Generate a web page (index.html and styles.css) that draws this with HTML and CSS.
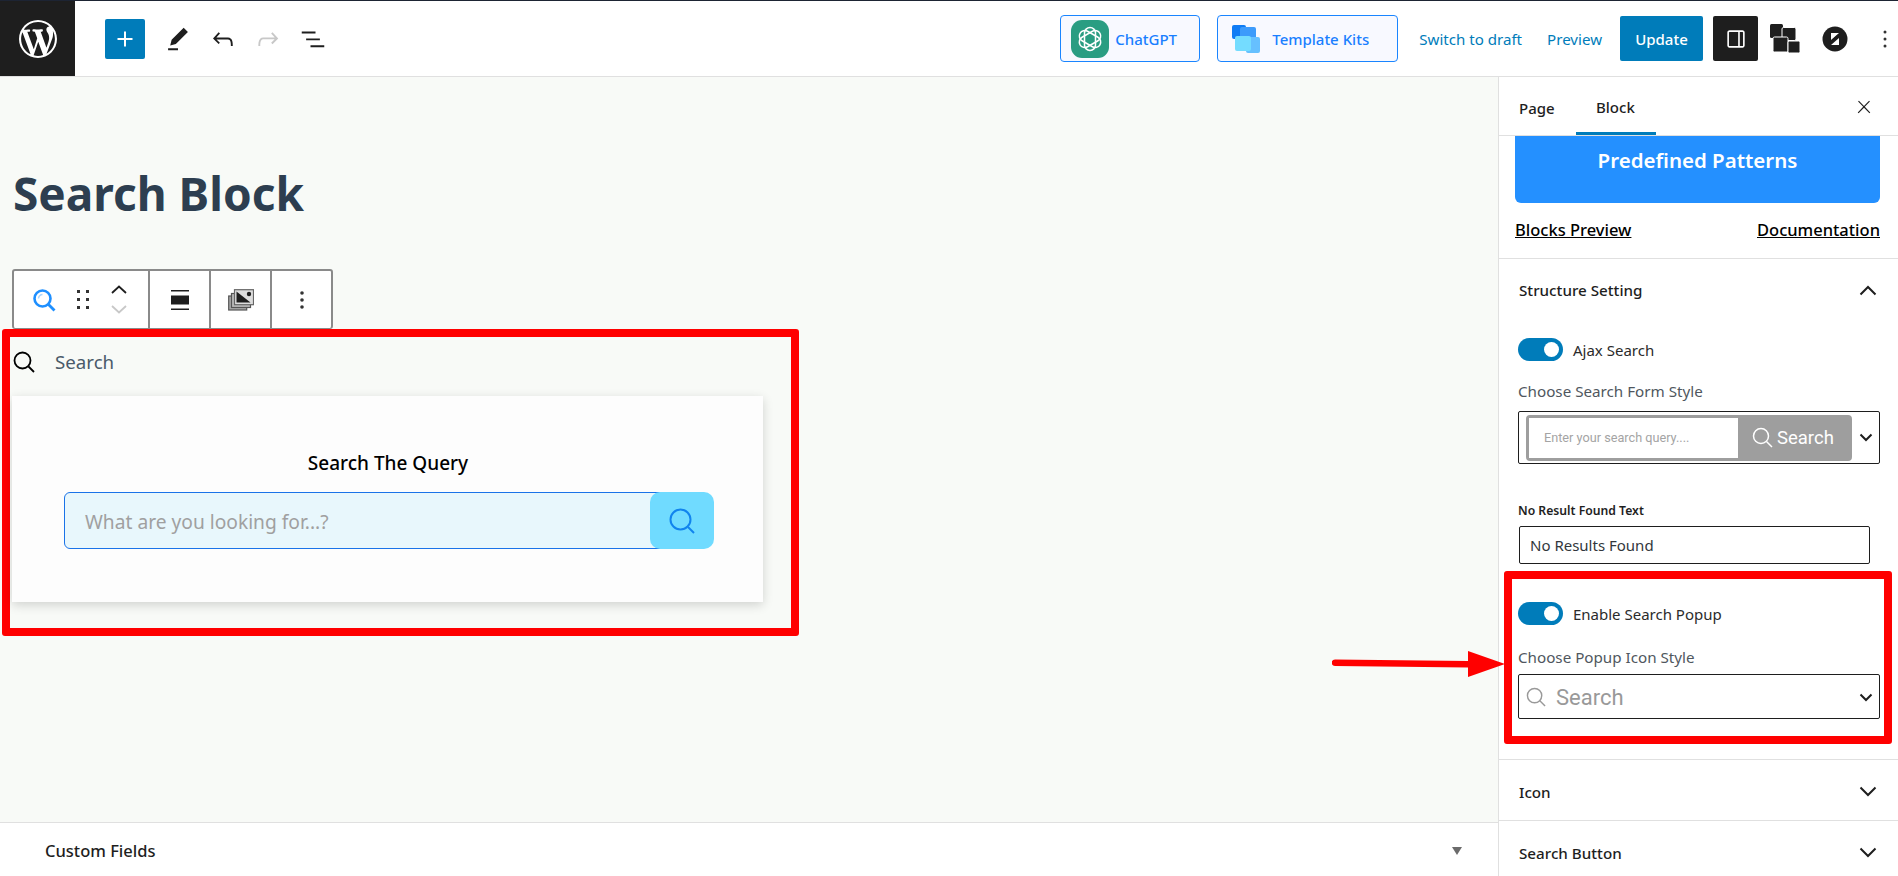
FILE: index.html
```html
<!DOCTYPE html>
<html lang="en">
<head>
<meta charset="utf-8">
<title>Search Block</title>
<link rel="stylesheet" href="styles.css">
</head>
<body>
<div class="app">
  <header class="topbar">
    <div class="wp-logo"><svg viewBox="0 0 20 20" width="38" height="38"><path fill="#fff" d="M20 10c0-5.51-4.49-10-10-10C4.48 0 0 4.49 0 10c0 5.52 4.48 10 10 10 5.51 0 10-4.48 10-10zM7.78 15.37L4.37 6.22c.55-.02 1.17-.08 1.17-.08.5-.06.44-1.13-.06-1.11 0 0-1.45.11-2.37.11-.18 0-.37 0-.58-.01C4.12 2.69 6.87 1.11 10 1.11c2.33 0 4.45.87 6.05 2.34-.68-.11-1.65.39-1.65 1.58 0 .74.45 1.36.9 2.1.35.61.55 1.36.55 2.46 0 1.49-1.4 5-1.4 5l-3.03-8.37c.54-.02.82-.17.82-.17.5-.05.44-1.25-.06-1.22 0 0-1.44.12-2.38.12-.87 0-2.33-.12-2.33-.12-.5-.03-.56 1.2-.06 1.22l.92.08 1.26 3.41zM17.41 10c.24-.64.74-1.87.43-4.25.7 1.29 1.05 2.71 1.05 4.25 0 3.29-1.73 6.24-4.4 7.78.97-2.59 1.94-5.2 2.92-7.78zM6.1 18.09C3.12 16.65 1.11 13.53 1.11 10c0-1.3.23-2.48.72-3.59C3.25 10.3 4.67 14.2 6.1 18.09zm4.03-6.63l2.58 6.98c-.86.29-1.76.45-2.71.45-.79 0-1.57-.11-2.29-.33.81-2.38 1.62-4.74 2.42-7.1z"/></svg></div>
    <div class="tools-left">
      <button class="add-btn"><svg viewBox="0 0 24 24" width="24" height="24"><path fill="#fff" d="M11 4.500h2V11h6.500v2H13v6.500h-2V13H4.500v-2H11z"/></svg></button>
      <svg class="tool-ic tool-pencil" viewBox="0 0 24 24" width="34" height="34"><path fill="#1e1e1e" d="m19 7-3-3-8.500 8.500-1 4 4-1L19 7Zm-7 11.500H5V20h7v-1.500Z"/></svg>
      <svg class="tool-ic" viewBox="0 0 24 24" width="30" height="30"><path fill="#1e1e1e" d="M18.300 11.700c-.6-.6-1.400-.9-2.300-.9H6.700l2.900-3.300-1.100-1-4.500 5L8.500 16l1-1-2.700-2.700H16c.5 0 .9.2 1.300.5 1 1 1 3.400 1 4.500v.3h1.500v-.2c0-1.500 0-4.300-1.500-5.700z"/></svg>
      <svg class="tool-ic" viewBox="0 0 24 24" width="30" height="30"><path fill="#c8c8c8" d="M15.600 6.500l-1.100 1 2.900 3.300H8c-.9 0-1.700.3-2.300.9-1.400 1.500-1.400 4.200-1.400 5.600v.2h1.500v-.3c0-1.100 0-3.500 1-4.500.3-.3.7-.5 1.300-.5h9.200L14.500 15l1.100 1.100 4.600-4.600-4.600-5z"/></svg>
      <svg class="tool-ic" viewBox="0 0 24 24" width="30" height="30"><path fill="#1e1e1e" d="M3 6h11v1.500H3V6zm3.500 5.500h11V13h-11v-1.500zM21 17H10v1.500h11V17z"/></svg>
    </div>
    <div class="tools-right">
      <button class="pill pill-gpt">
        <svg class="gpt-logo" viewBox="0 0 38 38" width="38" height="38">
          <rect width="38" height="38" rx="11" fill="#2a9d82"/>
          <g fill="none" stroke="#fff" stroke-width="1.500">
            <rect x="13.500" y="7.500" width="11" height="23" rx="5.500"/>
            <rect x="13.500" y="7.500" width="11" height="23" rx="5.500" transform="rotate(60 19 19)"/>
            <rect x="13.500" y="7.500" width="11" height="23" rx="5.500" transform="rotate(120 19 19)"/>
          </g>
        </svg>
        <span>ChatGPT</span>
      </button>
      <button class="pill pill-kits">
        <svg viewBox="0 0 28 28" width="28" height="28">
          <rect x="0" y="0" width="14" height="14" rx="2" fill="#0f7cf5"/>
          <rect x="8" y="2" width="16" height="15" rx="2" fill="#3d9bfb"/>
          <rect x="14" y="12" width="14" height="16" rx="2" fill="#66c0ff"/>
          <rect x="3" y="11" width="16" height="15" rx="2" fill="#74dcff"/>
        </svg>
        <span>Template Kits</span>
      </button>
      <a class="top-link link-draft">Switch to draft</a>
      <a class="top-link link-preview">Preview</a>
      <button class="update">Update</button>
      <button class="settings"><svg viewBox="0 0 24 24" width="26" height="26"><path fill="#fff" d="M18 4H6c-1.100 0-2 .9-2 2v12c0 1.100.9 2 2 2h12c1.100 0 2-.9 2-2V6c0-1.100-.9-2-2-2zM5.500 18V6c0-.3.2-.5.5-.5h8v13H6c-.3 0-.5-.2-.5-.5zm13 0c0 .3-.2.5-.5.5h-2.500v-13H18c.3 0 .5.2.5.5v12z"/></svg></button>
      <svg class="stack-ic" viewBox="0 0 30 30" width="30" height="30">
        <rect x="0" y="0" width="13" height="14" rx="1.500" fill="#1e1e1e"/>
        <rect x="12" y="3.500" width="14" height="13" rx="1.500" fill="#1e1e1e" stroke="#fff" stroke-width="1"/>
        <rect x="3" y="13" width="15" height="15" rx="1.500" fill="#1e1e1e" stroke="#fff" stroke-width="1"/>
        <rect x="18" y="17" width="12" height="12" rx="1.500" fill="#1e1e1e" stroke="#fff" stroke-width="1"/>
      </svg>
      <svg class="circle-ic" viewBox="0 0 26 26" width="26" height="26">
        <circle cx="13" cy="13" r="12.500" fill="#1e1e1e"/>
        <path d="M9 7h8l-8 7zM17 12v7H9z" fill="#fff"/>
        <path d="M7 17 19 7" stroke="#1e1e1e" stroke-width="1.500"/>
      </svg>
      <svg class="more-ic" viewBox="0 0 4 18" width="4" height="18"><circle cx="2" cy="2" r="1.500" fill="#333"/><circle cx="2" cy="9" r="1.500" fill="#333"/><circle cx="2" cy="16" r="1.500" fill="#333"/></svg>
    </div>
  </header>

  <div class="workspace">
    <main class="editor">
      <div class="canvas">
        <h1 class="page-title">Search Block</h1>
        <div class="block-toolbar">
          <div class="tb-group tb-first">
            <svg viewBox="0 0 24 24" width="24" height="24" class="tb-search"><circle cx="10.500" cy="10.500" r="8" fill="none" stroke="#1e8fff" stroke-width="2.600"/><path d="M16.500 16.500 22.500 22.500" stroke="#1e8fff" stroke-width="2.800"/><path d="M6.500 10.500a4 4 0 0 1 4-4" fill="none" stroke="#a9d5ff" stroke-width="1.500"/></svg>
            <svg viewBox="0 0 12 20" width="12" height="20" class="tb-drag"><g fill="#333"><rect x="0" y="0" width="3" height="3"/><rect x="9" y="0" width="3" height="3"/><rect x="0" y="8" width="3" height="3"/><rect x="9" y="8" width="3" height="3"/><rect x="0" y="16" width="3" height="3"/><rect x="9" y="16" width="3" height="3"/></g></svg>
            <div class="tb-move">
              <svg viewBox="0 0 16 9" width="16" height="9"><path d="M1 8 8 1.500 15 8" fill="none" stroke="#1e1e1e" stroke-width="1.800"/></svg>
              <svg viewBox="0 0 16 9" width="16" height="9"><path d="M1 1 8 7.500 15 1" fill="none" stroke="#c8c8c8" stroke-width="1.800"/></svg>
            </div>
          </div>
          <div class="tb-group tb-cell">
            <svg viewBox="0 0 18 20" width="18" height="20"><path fill="#1e1e1e" d="M0 0h18v1.500H0zM0 5.500h18v9H0zM0 18.500h18V20H0z"/></svg>
          </div>
          <div class="tb-group tb-cell">
            <svg viewBox="0 0 26 22" width="26" height="22"><rect x=".7" y="7" width="18" height="14" fill="#aaa" stroke="#555" stroke-width="1.200"/><rect x="3.500" y="4.500" width="19" height="14" fill="#bbb" stroke="#555" stroke-width="1.200"/><rect x="6.500" y=".7" width="19" height="15" fill="#ddd" stroke="#666" stroke-width="1.200"/><path d="M8.500 2.500v11h14z" fill="#1e1e1e"/><circle cx="21" cy="5" r="2.200" fill="#1e1e1e"/></svg>
          </div>
          <div class="tb-group tb-cell tb-last">
            <svg viewBox="0 0 4 18" width="4" height="18"><circle cx="2" cy="2" r="1.800" fill="#333"/><circle cx="2" cy="9" r="1.800" fill="#333"/><circle cx="2" cy="16" r="1.800" fill="#333"/></svg>
          </div>
        </div>
        <section class="red-frame block-frame">
          <div class="popup-trigger">
            <svg viewBox="0 0 22 22" width="22" height="22"><circle cx="9.500" cy="9.500" r="8" fill="none" stroke="#000" stroke-width="1.800"/><path d="M15.500 15.500 21 21" stroke="#000" stroke-width="1.800"/></svg>
            <span>Search</span>
          </div>
          <div class="popup-card">
            <div class="popup-title">Search The Query</div>
            <div class="popup-form">
              <div class="popup-input">What are you looking for...?</div>
              <div class="popup-btn"><svg viewBox="0 0 26 26" width="26" height="26"><circle cx="11.500" cy="11.500" r="10" fill="none" stroke="#1184ee" stroke-width="2"/><path d="M19 19 25 25" stroke="#1184ee" stroke-width="2"/></svg></div>
            </div>
          </div>
        </section>
      </div>
      <div class="meta-bar">
        <span>Custom Fields</span>
        <i class="meta-caret"></i>
      </div>
    </main>

    <aside class="sidebar">
      <div class="side-tabs">
        <div class="tab">Page</div>
        <div class="tab tab-active">Block</div>
        <svg class="close" viewBox="0 0 24 24" width="20" height="20"><path fill="#1e1e1e" d="M13 11.800l6.100-6.300-1-1-6.100 6.200-6.100-6.200-1 1 6.100 6.300-6.500 6.700 1 1 6.500-6.600 6.500 6.600 1-1z"/></svg>
      </div>
      <div class="patterns">
        <div class="patterns-btn">Predefined Patterns</div>
        <div class="patterns-links"><a>Blocks Preview</a><a>Documentation</a></div>
      </div>
      <section class="panel panel-open">
        <div class="panel-head panel-head-open">
          <span>Structure Setting</span>
          <svg viewBox="0 0 18 11" width="18" height="11"><path d="M1.500 9.500 9 2l7.500 7.500" fill="none" stroke="#1e1e1e" stroke-width="2"/></svg>
        </div>
        <div class="toggle-row"><span class="toggle"></span><span>Ajax Search</span></div>
        <div class="field-label">Choose Search Form Style</div>
        <div class="select select-form">
          <div class="form-preview">
            <div class="fp-input">Enter your search query....</div>
            <div class="fp-btn"><svg viewBox="0 0 22 22" width="22" height="22"><circle cx="9" cy="9" r="7.500" fill="none" stroke="#fff" stroke-width="1.500"/><path d="M14.500 14.500 20 20" stroke="#fff" stroke-width="1.500"/></svg><span>Search</span></div>
          </div>
          <svg class="sel-chev" viewBox="0 0 14 9" width="14" height="9"><path d="M1.500 1.500 7 7l5.500-5.500" fill="none" stroke="#1e1e1e" stroke-width="2"/></svg>
        </div>
        <div class="strong-label">No Result Found Text</div>
        <div class="text-input">No Results Found</div>
        <div class="red-frame side-frame">
          <div class="toggle-row toggle-row-framed"><span class="toggle"></span><span>Enable Search Popup</span></div>
          <div class="field-label field-label-framed">Choose Popup Icon Style</div>
          <div class="select select-icon">
            <svg viewBox="0 0 22 22" width="21" height="21"><circle cx="9" cy="9" r="7.500" fill="none" stroke="#999" stroke-width="1.500"/><path d="M14.500 14.500 20 20" stroke="#999" stroke-width="1.500"/></svg>
            <span>Search</span>
            <svg class="sel-chev" viewBox="0 0 14 9" width="14" height="9"><path d="M1.500 1.500 7 7l5.500-5.500" fill="none" stroke="#1e1e1e" stroke-width="2"/></svg>
          </div>
        </div>
      </section>
      <section class="panel panel-closed">
        <div class="panel-head"><span>Icon</span><svg viewBox="0 0 18 11" width="18" height="11"><path d="M1.500 1.500 9 9l7.500-7.500" fill="none" stroke="#1e1e1e" stroke-width="2"/></svg></div>
      </section>
      <section class="panel panel-closed">
        <div class="panel-head"><span>Search Button</span><svg viewBox="0 0 18 11" width="18" height="11"><path d="M1.500 1.500 9 9l7.500-7.500" fill="none" stroke="#1e1e1e" stroke-width="2"/></svg></div>
      </section>
    </aside>
  </div>

  <svg class="annot-arrow" viewBox="0 0 173 26" width="173" height="26"><path fill="#f00" d="M3 8.500 136 10V0l37 13-37 13V16.500L3 15a3 3 0 0 1 0-6.500z"/></svg>
</div>
</body>
</html>
```

FILE: styles.css
```css
* { box-sizing: border-box; }
html, body { margin: 0; height: 100%; }
body {
  font-family: "Noto Sans", "Open Sans", sans-serif;
  color: #1e1e1e;
  background: #fff;
  overflow: hidden;
}
button { font-family: inherit; border: 0; padding: 0; cursor: pointer; }
svg { display: block; flex: none; }

.app { position: relative; width: 1898px; height: 876px; display: flex; flex-direction: column; }

/* Top bar */
.topbar {
  height: 77px;
  flex: none;
  display: flex;
  align-items: center;
  border-top: 1px solid #1d2433;
  border-bottom: 1px solid #e0e0e0;
  background: #fff;
}
.wp-logo { width: 75px; height: 75px; background: #1e1e1e; display: flex; align-items: center; justify-content: center; }
.tools-left { display: flex; align-items: center; margin-left: 30px; }
.add-btn { width: 40px; height: 40px; background: #007cba; border-radius: 2px; display: flex; align-items: center; justify-content: center; margin-right: 18px; }
.tool-ic { margin-right: 15px; }
.tool-pencil { margin: 0 13px 0 -2px; }
.tools-right { margin-left: auto; display: flex; align-items: center; }
.pill {
  height: 47px;
  display: flex;
  align-items: center;
  border: 1px solid #1a85ff;
  border-radius: 4px;
  background: #f8f9ff;
  color: #1a7fff;
  font-size: 15px;
  font-weight: 500;
}
.pill-gpt { width: 140px; padding-left: 10px; margin-right: 17px; gap: 6px; }
.pill-kits { width: 181px; padding-left: 14px; margin-right: 21px; gap: 12px; }
.top-link { font-size: 15.100px; color: #007cba; }
.link-draft { margin-right: 25px; }
.link-preview { margin-right: 18px; }
.update { width: 83px; height: 45px; background: #007cba; color: #fff; font-size: 15px; font-weight: 500; border-radius: 2px; margin-right: 10px; }
.settings { width: 45px; height: 45px; background: #1e1e1e; border-radius: 2px; display: flex; align-items: center; justify-content: center; margin-right: 12px; }
.stack-ic { margin-right: 22px; }
.circle-ic { margin-right: 35px; }
.more-ic { margin-right: 11px; }

/* Workspace */
.workspace { flex: 1; min-height: 0; display: grid; grid-template-columns: 1fr 400px; }
.editor { display: flex; flex-direction: column; min-width: 0; }
.canvas { flex: 1; background: #f8faf7; overflow: hidden; }
.page-title {
  margin: 86px 0 46px 13px;
  font-size: 46px;
  line-height: 60px;
  font-weight: 700;
  color: #2d3e50;
}
.block-toolbar {
  margin-left: 12px;
  width: 321px;
  height: 60px;
  display: flex;
  background: #fff;
  border: 2px solid #8a8a8a;
  border-bottom-width: 1px;
  border-radius: 3px;
}
.tb-group { display: flex; align-items: center; height: 100%; border-right: 2px solid #8a8a8a; }
.tb-first { width: 136px; padding-left: 18px; }
.tb-search { margin-right: 21px; }
.tb-drag { margin-right: 22px; }
.tb-move { display: flex; flex-direction: column; gap: 11px; }
.tb-cell { width: 61px; justify-content: center; }
.tb-last { border-right: 0; flex: 1; }

.red-frame { border: 8px solid #f00; border-radius: 3px; }
.block-frame { margin-left: 2px; width: 797px; height: 307px; }
.popup-trigger { height: 59px; padding: 0 0 10px 3px; display: flex; align-items: center; gap: 20px; font-size: 18.700px; color: #4a5a6a; }
.popup-card {
  margin-left: 2px;
  width: 751px;
  height: 206px;
  padding: 51px 0 0 52px;
  background: #fdfdfd;
  box-shadow: 0 3px 10px rgba(0,0,0,.16);
}
.popup-title { width: 648px; text-align: center; font-size: 19px; line-height: 32px; font-weight: 500; color: #000; margin-bottom: 13px; }
.popup-form { position: relative; width: 650px; height: 57px; display: flex; }
.popup-input {
  flex: 1;
  margin-right: -12px;
  background: #e8f7fc;
  border: 1px solid #1a73e8;
  border-radius: 6px 0 0 6px;
  padding: 2px 0 0 20px;
  display: flex;
  align-items: center;
  font-size: 19.200px;
  color: #a0a0a0;
}
.popup-btn { position: relative; width: 64px; background: #70dbff; border-radius: 10px; display: flex; align-items: center; justify-content: center; }

.meta-bar {
  height: 54px;
  flex: none;
  border-top: 1px solid #e0e0e0;
  background: #fff;
  display: flex;
  align-items: center;
  justify-content: space-between;
  padding: 2px 36px 0 45px;
  font-size: 16.500px;
  font-weight: 500;
  color: #1e1e1e;
}
.meta-caret { width: 0; height: 0; border-left: 5px solid transparent; border-right: 5px solid transparent; border-top: 8px solid #6b6b6b; }

/* Sidebar */
.sidebar { border-left: 1px solid #e0e0e0; background: #fff; overflow: hidden; }
.side-tabs {
  height: 59px;
  display: flex;
  align-items: stretch;
  border-bottom: 1px solid #e0e0e0;
  position: relative;
}
.tab { width: 77px; padding: 4px 0 0 20px; display: flex; align-items: center; font-size: 15px; font-weight: 500; height: 58px; }
.tab-active { width: 80px; padding-left: 20px; border-bottom: 3px solid #007cba; }
.close { position: absolute; right: 24px; top: 20px; }
.patterns { height: 124px; border-bottom: 1px solid #e0e0e0; padding: 0 18px 0 16px; margin-top: -1px; }
.patterns-btn {
  height: 68px;
  background: #2490ff;
  border-radius: 0 0 6px 6px;
  color: #fff;
  text-align: center;
  font-size: 20.500px;
  font-weight: 600;
  line-height: 28px;
  padding-top: 11px;
}
.patterns-links { display: flex; justify-content: space-between; margin-top: 15px; font-size: 16.500px; line-height: 24px; font-weight: 500; color: #000; }
.patterns-links a { text-decoration: underline; }
.panel { border-bottom: 1px solid #e0e0e0; }
.panel-open { height: 501px; padding: 0 0 0 19px; }
.panel-head { display: flex; align-items: center; justify-content: space-between; font-size: 15.200px; font-weight: 500; padding-right: 21px; }
.panel-head-open { height: 62px; padding-left: 1px; }
.panel-closed .panel-head { height: 60px; padding: 3px 21px 0 20px; }
.panel-closed .panel-head svg { margin-top: -1px; }
.panel-closed { height: 61px; }
.toggle-row { display: flex; align-items: center; gap: 10px; font-size: 15px; color: #2b2b2b; height: 23px; margin-top: 17px; }
.toggle { width: 45px; height: 23px; background: #007cba; border-radius: 12px; position: relative; flex: none; }
.toggle::after { content: ""; position: absolute; right: 4px; top: 4px; width: 15px; height: 15px; background: #fff; border-radius: 50%; }
.field-label { margin: 20px 0 0 0; font-size: 15.200px; line-height: 20px; color: #50575e; }
.select { width: 362px; border: 1px solid #1e1e1e; border-radius: 2px; display: flex; align-items: center; background: #fff; }
.select-form { height: 53px; margin-top: 10px; padding-left: 7px; }
.form-preview { width: 326px; height: 46px; display: flex; border: 3px solid #9e9e9e; border-radius: 4px; }
.fp-input { width: 209px; background: #fff; font-size: 12.700px; color: #a4a4a4; display: flex; align-items: center; padding-left: 15px; font-family: Roboto, sans-serif; }
.fp-btn { flex: 1; background: #9e9e9e; display: flex; align-items: center; gap: 3px; padding-left: 14px; color: #fff; font-size: 18.500px; font-family: Roboto, sans-serif; }
.sel-chev { margin-left: auto; margin-right: 6px; }
.strong-label { margin-top: 38px; font-size: 12.200px; line-height: 18px; font-weight: 600; color: #1e1e1e; }
.text-input { width: 351px; height: 38px; margin: 6px 0 0 1px; border: 1px solid #1e1e1e; border-radius: 2px; padding-left: 10px; display: flex; align-items: center; font-size: 15px; color: #32373c; }
.side-frame { margin: 7px 0 0 -14px; width: 388px; height: 173px; padding: 23px 0 0 6px; }
.toggle-row-framed { margin-top: 0; }
.field-label-framed { margin: 22px 0 0 0; }
.select-icon { height: 45px; margin: 7px 0 0 0; padding: 1px 0 0 7px; gap: 9px; font-size: 22px; color: #999; font-family: Roboto, sans-serif; }

.annot-arrow { position: absolute; left: 1332px; top: 651px; }
```
